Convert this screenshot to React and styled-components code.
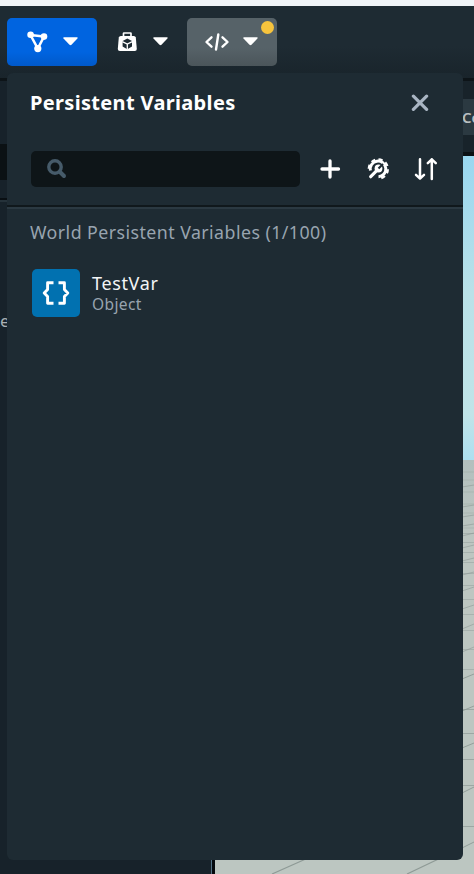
import React from "react";
import styled, { createGlobalStyle } from "styled-components";

const GlobalStyle = createGlobalStyle`
  * { box-sizing: border-box; }
  body { margin: 0; background: #1d2a32; font-family: "Noto Sans", sans-serif; overflow: hidden; }
  svg { display: block; flex: none; }
`;

const Window = styled.div`
  position: relative;
  width: 474px;
  height: 874px;
  overflow: hidden;
  display: flex;
  flex-direction: column;
`;

const TitleStrip = styled.div`
  height: 6px;
  background: #f0f4f8;
`;

const Toolbar = styled.header`
  height: 75px;
  padding: 12px 6.5px 0;
  display: flex;
  background: linear-gradient(#1e2b33 40px, #19242b 72px);
  border-bottom: 3px solid #0d1418;
`;

const backgrounds = {
  active: "linear-gradient(#0064e0 34px, #0059ca 48px)",
  open: "linear-gradient(#566268 30px, #4b555a 48px)",
  plain: "transparent",
};

const ToolButton = styled.button`
  position: relative;
  width: 90px;
  height: 48px;
  padding: 0 19px 1px 17px;
  border: 0;
  border-radius: 5px;
  display: flex;
  align-items: center;
  justify-content: space-between;
  color: #fff;
  background: ${(p) => backgrounds[p.$tone]};
`;

const Badge = styled.span`
  position: absolute;
  top: 3px;
  right: 3px;
  width: 13px;
  height: 13px;
  border-radius: 50%;
  background: #f7c43d;
`;

const Workspace = styled.main`
  flex: 1;
  display: grid;
  grid-template-columns: 215px 1fr;
`;

const SidePane = styled.aside`
  display: flex;
  flex-direction: column;
  background: #17222a;
  border-right: 3px solid #04090d;
  box-shadow: inset -1px 0 #527185;
`;

const SideHeader = styled.div`
  height: 119px;
  padding-top: 63px;
  border-bottom: 2px solid #090f13;
  box-shadow: 0 2px #25323a;
`;

const SideField = styled.div`
  height: 36px;
  background: #0b1114;
`;

const SideLabel = styled.div`
  margin-top: 109px;
  font-size: 17px;
  line-height: 24px;
  color: #a9b0b3;
`;

const Stage = styled.section`
  display: flex;
  flex-direction: column;
`;

const TabBar = styled.div`
  height: 75px;
  padding: 18px 0 17px;
  background: #18232a;
  border-bottom: 4px solid #0b1114;
`;

const Tab = styled.div`
  height: 36px;
  padding-left: 247px;
  font-size: 15px;
  font-weight: 600;
  line-height: 37px;
  white-space: nowrap;
  overflow: hidden;
  color: #b9bec0;
  background: #2b3941;
`;

const Sky = styled.div`
  height: 304px;
  background: linear-gradient(#99d7f0, #b9e1e8 45%, #c0e4e8 85%, #addff0);
`;

const Ground = styled.div`
  flex: 1;
  background: linear-gradient(#b3c0be, #bcc6c1 90px);
`;

const Panel = styled.section`
  position: absolute;
  left: 7px;
  top: 73px;
  width: 456px;
  height: 787px;
  border-radius: 6px;
  display: flex;
  flex-direction: column;
  background: #1e2b33;
`;

const PanelHeader = styled.div`
  height: 60px;
  padding: 0 34px 0 23px;
  display: flex;
  align-items: center;
  justify-content: space-between;
`;

const Title = styled.h1`
  margin: 0;
  font-size: 20px;
  font-weight: 700;
  line-height: 28px;
  letter-spacing: 0.33px;
  white-space: nowrap;
  color: #fff;
`;

const SearchRow = styled.div`
  height: 74px;
  padding: 18px 24px 0;
  display: flex;
  align-items: flex-start;
  border-bottom: 2px solid #10181c;
  box-shadow: 0 2px #2b3942;
`;

const SearchField = styled.div`
  width: 269px;
  height: 36px;
  padding-left: 16px;
  border-radius: 5px;
  display: flex;
  align-items: center;
  background: #0e1518;
`;

const Actions = styled.div`
  height: 36px;
  margin-left: 20px;
  display: flex;
  align-items: center;
  gap: 25.5px;
`;

const List = styled.div`
  padding: 13px 23px 0;
`;

const SectionTitle = styled.div`
  font-size: 17.8px;
  line-height: 24px;
  letter-spacing: 0.44px;
  white-space: nowrap;
  color: #98a4af;
`;

const VariableRow = styled.div`
  margin: 25px 0 0 2px;
  display: flex;
  gap: 12px;
`;

const TypeTile = styled.div`
  width: 48px;
  height: 48px;
  border-radius: 5px;
  display: grid;
  place-items: center;
  background: #0171b0;
`;

const VariableText = styled.div`
  padding-top: 3px;
`;

const VariableName = styled.div`
  font-size: 18px;
  line-height: 22px;
  letter-spacing: 0.65px;
  color: #f3f5f6;
`;

const VariableType = styled.div`
  font-size: 15.5px;
  line-height: 21px;
  letter-spacing: 0.4px;
  color: #98a4af;
`;

const Caret = () => (
  <svg width="15" height="9" viewBox="0 0 15 9">
    <path d="M1 .3h13q1.2.2.4 1.2L8.5 7.8q-1 .9-2 0L.5 1.5Q-.2.5 1 .3Z" fill="#fff" />
  </svg>
);

const NodesIcon = () => (
  <svg width="26" height="22" viewBox="0 0 26 22" fill="none" stroke="#fff" strokeWidth="2.500">
    <path d="M6.500 4 20 5.500 13.800 17.500Z" />
    <g fill="#fff" stroke="none">
      <circle cx="6.600" cy="3.800" r="3.300" />
      <circle cx="20" cy="5.600" r="3.300" />
      <circle cx="13.800" cy="17.600" r="3.600" />
    </g>
  </svg>
);

const BagIcon = () => (
  <svg width="26" height="22" viewBox="0 0 26 22" fill="none">
    <path d="M9.500 6V2.500Q9.500 2 10 2h6.500q.5 0 .5.5V6" stroke="#fff" strokeWidth="1.700" />
    <path d="M6.800 5h13q1.700 0 2 1.500l1 11.500q0 2-2 2h-15q-2 0-2-2l1-11.500Q5.100 5 6.800 5Z" fill="#fff" />
    <path d="m13.300 7.500 4.700 2.500v5.500l-4.700 2.700-4.700-2.700V10Z" fill="#1e2b33" />
    <path d="m8.300 10.600 5 2.500 5-2.500M13.300 13.100v5.500" stroke="#fff" strokeWidth="1.300" />
  </svg>
);

const CodeIcon = () => (
  <svg width="26" height="22" viewBox="0 0 26 22" fill="none" stroke="#fff" strokeWidth="2.400" strokeLinecap="round" strokeLinejoin="round">
    <path d="m7.500 6.300-5 4.700 5 4.700M18.500 6.300l5 4.700-5 4.700M14.300 3.500l-2.300 15" />
  </svg>
);

const CloseIcon = () => (
  <svg width="18" height="18" viewBox="0 0 18 18" fill="none" stroke="#a9b5c3" strokeWidth="3.200" strokeLinecap="round">
    <path d="M2.400 2.200 15.600 15.400M15.600 2.200 2.400 15.400" />
  </svg>
);

const SearchIcon = () => (
  <svg width="20" height="20" viewBox="0 0 20 20" fill="none" stroke="#465b6a" strokeLinecap="round">
    <circle cx="8" cy="8" r="6.200" strokeWidth="3.400" />
    <path d="m13 13 4 4" strokeWidth="4" />
  </svg>
);

const PlusIcon = () => (
  <svg width="21" height="20" viewBox="0 0 21 20" fill="none" stroke="#fff" strokeWidth="3.300" strokeLinecap="round">
    <path d="M10 2v16M2 10h16.500" />
  </svg>
);

const GearWrenchIcon = () => (
  <svg width="22" height="22" viewBox="0 0 22 22" fill="none">
    <path d="M3.400 12.500A7.800 7.800 0 1 1 11.500 18.700" stroke="#fff" strokeWidth="3" />
    <path d="M1.700 10.800A9.600 9.600 0 1 1 11.200 20.600" stroke="#fff" strokeWidth="2.200" strokeDasharray="4.200 3.300" />
    <path d="m3.700 18.700 7-7" stroke="#fff" strokeWidth="3.200" strokeLinecap="round" />
    <circle cx="11.500" cy="10.500" r="3.900" fill="#fff" />
    <path d="m11.500 10.500 4.500-4.500" stroke="#1e2b33" strokeWidth="2.200" />
  </svg>
);

const SortIcon = () => (
  <svg width="24" height="24" viewBox="0 0 24 24" fill="none" stroke="#fff" strokeWidth="2.500" strokeLinecap="round" strokeLinejoin="round">
    <path d="M6 2.200v19.300M2 17.800l4 3.800 4-3.800M17.800 22V2.300M13.800 6.100l4-3.800 4 3.800" />
  </svg>
);

const BracesIcon = () => (
  <svg width="28" height="26" viewBox="0 0 28 26" fill="none" stroke="#fff" strokeWidth="2.900" strokeLinejoin="round">
    <path d="M11.500 2.700H5.600v6.800L2.200 13l3.400 3.500v6.800h5.900M16.500 2.700h5.900v6.800l3.400 3.500-3.400 3.500v6.800h-5.900" />
  </svg>
);

const GridLines = () => (
  <svg width="259" height="414" viewBox="0 0 259 414" fill="none" stroke="#8e9a96">
    <path d="M247 12h12M247 20h12M247 32h12M247 44h12M247 53h12M247 68h12" opacity=".3" />
    <path d="M247 73.500h12M247 82.500h12M247 92.500h12M247 102.500h12M247 113.500h12M247 125.500h12M247 139.500h12M247 154.500h12M247 170.500h12M247 189.500h12M247 209.500h12" opacity=".45" />
    <path d="M247 27l12-2M247 47l12-2M247 57l12-2M247 66l12-2M247 76l12-3M247 88l12-3M247 101l12-3M247 115l12-3M247 131l12-4M247 149l12-4M247 169l12-5M247 192l12-5" opacity=".6" />
    <path d="M247 249.500h12M247 273.500h12M247 299.500h12M247 325.500h12M247 366.500h12" opacity=".7" />
    <path d="M247 219l12-5M247 251l12-5M247 288l12-5M247 333l12-6M247 388l12-6" opacity=".9" />
    <path d="M57 414 102 394M192 414l42-20" strokeWidth="1.200" />
  </svg>
);

export default function App() {
  return (
    <Window>
      <GlobalStyle />
      <TitleStrip />
      <Toolbar>
        <ToolButton $tone="active"><NodesIcon /><Caret /></ToolButton>
        <ToolButton $tone="plain"><BagIcon /><Caret /></ToolButton>
        <ToolButton $tone="open"><CodeIcon /><Caret /><Badge /></ToolButton>
      </Toolbar>
      <Workspace>
        <SidePane>
          <SideHeader><SideField /></SideHeader>
          <SideLabel>e</SideLabel>
        </SidePane>
        <Stage>
          <TabBar><Tab>Co</Tab></TabBar>
          <Sky />
          <Ground><GridLines /></Ground>
        </Stage>
      </Workspace>
      <Panel>
        <PanelHeader>
          <Title>Persistent Variables</Title>
          <CloseIcon />
        </PanelHeader>
        <SearchRow>
          <SearchField><SearchIcon /></SearchField>
          <Actions><PlusIcon /><GearWrenchIcon /><SortIcon /></Actions>
        </SearchRow>
        <List>
          <SectionTitle>World Persistent Variables (1/100)</SectionTitle>
          <VariableRow>
            <TypeTile><BracesIcon /></TypeTile>
            <VariableText>
              <VariableName>TestVar</VariableName>
              <VariableType>Object</VariableType>
            </VariableText>
          </VariableRow>
        </List>
      </Panel>
    </Window>
  );
}
